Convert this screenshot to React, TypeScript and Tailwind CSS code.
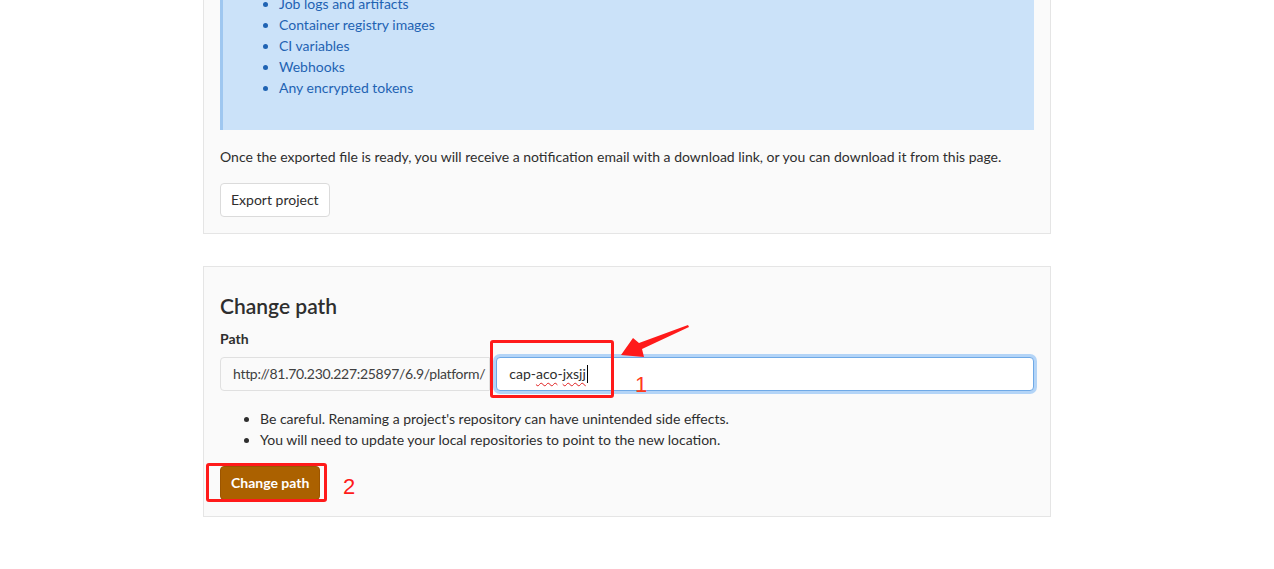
import React from "react";

export default function App() {
  const items = [
    "Job logs and artifacts",
    "Container registry images",
    "CI variables",
    "Webhooks",
    "Any encrypted tokens",
  ];
  return (
    <div className="relative h-[569px] w-full overflow-hidden bg-white text-[14px] leading-[20px] text-[#2e2e2e] font-['Lato',sans-serif]">
      <div className="ml-[203px] w-[848px]">
        {/* Export panel (scrolled) */}
        <div className="border-x border-b border-[#e5e5e5] bg-[#fafafa] px-4 pb-4">
          <div className="border-l-[3px] border-[#9fc7f0] bg-[#cbe2f9] pb-[32px]">
            <ul className="-mt-[7px] list-disc pl-[56px] leading-[21px] text-[#1f63b3]">
              {items.map((t) => (
                <li key={t} className="marker:text-[#1f63b3]">
                  {t}
                </li>
              ))}
            </ul>
          </div>
          <p className="mt-[17px]">
            Once the exported file is ready, you will receive a notification email with a download link, or you can download it from this page.
          </p>
          <button className="mt-4 rounded-[4px] border border-[#dbdbdb] bg-white px-[10px] py-[6px] leading-[20px] text-[#2e2e2e]">
            Export project
          </button>
        </div>

        {/* Change path panel */}
        <div className="mt-8 border border-[#e5e5e5] bg-[#fafafa] p-4">
          <h3 className="mt-[11px] text-[21px] font-semibold leading-[24px] text-[#2e2e2e]">Change path</h3>
          <div className="mt-[11px] font-bold">Path</div>
          <div className="mt-2 flex items-center gap-[6px]">
            <div className="flex h-[34px] shrink-0 items-center whitespace-nowrap rounded-l-[4px] border border-[#e0e0e0] bg-[#fafafa] pl-3 pr-[4px] tracking-[-0.3px] text-[#404040]">
              http://81.70.230.227:25897/6.9/platform/
            </div>
            <div className="flex h-[34px] flex-1 items-center rounded-[4px] border border-[#6fa9e6] bg-white px-3 shadow-[0_0_0_3px_#b3d4f7]">
              <span>
                cap-<span className="underline decoration-wavy decoration-[#e02020] decoration-1 underline-offset-[3px]">aco</span>-<span className="underline decoration-wavy decoration-[#e02020] decoration-1 underline-offset-[3px]">jxsjj</span>
              </span>
              <span className="ml-[1px] inline-block h-[18px] w-[1px] bg-black" />
            </div>
          </div>
          <ul className="mt-[17px] list-disc pl-[40px] leading-[21px] text-[#2e2e2e]">
            <li>Be careful. Renaming a project's repository can have unintended side effects.</li>
            <li>You will need to update your local repositories to point to the new location.</li>
          </ul>
          <button className="mt-4 rounded-[4px] border border-[#9c5500] bg-[#ab6100] px-[10px] py-[6px] font-bold leading-[20px] text-white">
            Change path
          </button>
        </div>
      </div>

      {/* Annotations */}
      <div className="pointer-events-none absolute left-[490px] top-[340px] h-[58px] w-[124px] rounded-[3px] border-[3px] border-[#ff1a1a]" />
      <div className="pointer-events-none absolute left-[206px] top-[463px] h-[39px] w-[121px] rounded-[3px] border-[3px] border-[#ff1a1a]" />
      <div className="pointer-events-none absolute left-[635px] top-[372px] text-[22px] leading-[26px] text-[#ff3b1a] font-['Liberation_Sans',sans-serif]">1</div>
      <div className="pointer-events-none absolute left-[343px] top-[474px] text-[22px] leading-[26px] text-[#ff1a1a] font-['Liberation_Sans',sans-serif]">2</div>
      <svg className="pointer-events-none absolute left-0 top-0" width="1274" height="569" viewBox="0 0 1274 569">
        <polygon
          points="688,325 689,327 642,349 644,357 621,355 633,338 639,343"
          fill="#ff1a1a"
        />
      </svg>
    </div>
  );
}
